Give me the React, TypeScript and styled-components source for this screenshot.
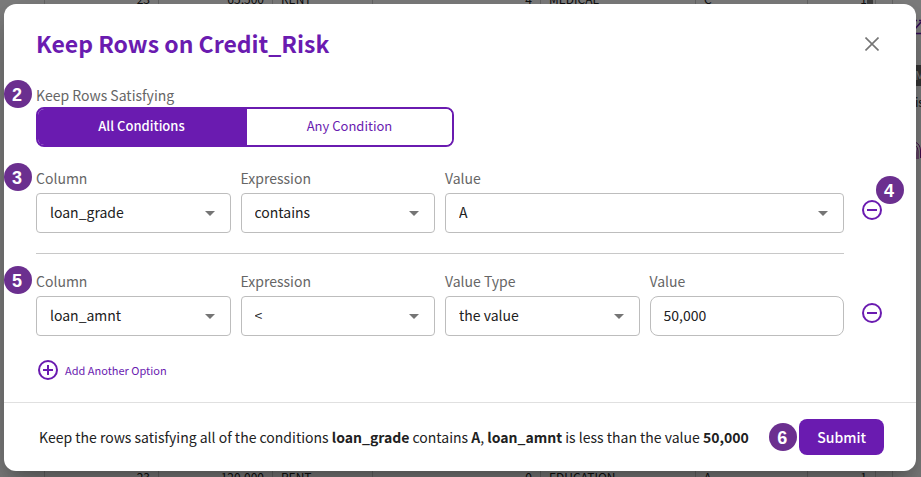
import React, { useId } from "react";
import styled, { createGlobalStyle, css } from "styled-components";

const purple = "#6a1bb0";

const GlobalStyle = createGlobalStyle`
  *, *::before, *::after { box-sizing: border-box; }
  body {
    margin: 0;
    color: #212121;
    font-family: "Noto Sans CJK JP", "Noto Sans", sans-serif;
    font-size: 14px;
    line-height: 20px;
  }
  button, input, select { font: inherit; color: inherit; margin: 0; }
`;

const Page = styled.div`
  position: relative;
  display: grid;
  min-height: 100vh;
  overflow: hidden;
`;

const Sheet = styled.div`
  position: absolute;
  inset: 0;
  display: flex;
  align-items: center;
  padding-bottom: 2px;
  overflow: hidden;
  background: #fff;
`;

const SheetTable = styled.table`
  flex: none;
  width: 848px;
  margin-left: 44px;
  border-collapse: collapse;
  table-layout: fixed;
  font-size: 12px;
`;

const SheetRow = styled.tr<{ $tall?: boolean }>`
  height: ${(p) => (p.$tall ? "448px" : "30px")};
`;

const SheetCell = styled.td<{ $numeric?: boolean }>`
  padding: 0 8px;
  border: solid #d0d0d0;
  border-width: 0 1px;
  text-align: ${(p) => (p.$numeric ? "right" : "left")};
`;

const ScrollThumb = styled.div`
  position: absolute;
  top: 0;
  right: 48px;
  width: 6px;
  height: 40px;
  background: #808080;
`;

const SidePanel = styled.aside`
  flex: 1;
  align-self: stretch;
  display: flex;
  flex-direction: column;
  align-items: flex-end;
  min-width: 0;
  padding-top: 18px;
  overflow: hidden;
`;

const SideTag = styled.span`
  width: 6px;
  height: 21px;
  margin: 29px 0 6px;
  overflow: hidden;
  background: #6c6c6c;
  color: #fff;
  font-size: 12px;
`;

const SideText = styled.span`
  width: 6px;
  height: 20px;
  margin-bottom: 28px;
  overflow: hidden;
  font-size: 12px;
`;

const Scrim = styled.div`
  position: absolute;
  inset: 0;
  background: rgba(0, 0, 0, 0.5);
`;

const Dialog = styled.section`
  position: relative;
  align-self: start;
  margin: 4px 5px 6px 4px;
  border-radius: 12px;
  background: #fff;
  box-shadow: 0 11px 15px -7px rgba(0, 0, 0, 0.2),
    0 24px 38px 3px rgba(0, 0, 0, 0.14), 0 9px 46px 8px rgba(0, 0, 0, 0.12);
`;

const Header = styled.header`
  display: flex;
  align-items: center;
  justify-content: space-between;
  padding: 24px 32px 25px;
`;

const Title = styled.h1`
  margin: 0;
  padding-bottom: 2px;
  color: ${purple};
  font-size: 23px;
  font-weight: 700;
  line-height: 30px;
`;

const IconButton = styled.button`
  display: flex;
  align-items: center;
  justify-content: center;
  width: 24px;
  height: 24px;
  padding: 0;
  border: 0;
  background: none;
  color: ${purple};
  cursor: pointer;
`;

const CloseButton = styled(IconButton)`
  color: #757575;
`;

const Body = styled.div`
  padding: 0 32px 22px;
`;

const Match = styled.div`
  position: relative;
  margin-bottom: 21px;
`;

const Caption = styled.div`
  margin-bottom: 2px;
  color: #666;
`;

const Segments = styled.div`
  display: grid;
  grid-template-columns: 1fr 1fr;
  width: 418px;
  max-width: 100%;
  height: 40px;
  overflow: hidden;
  border: 2px solid ${purple};
  border-radius: 8px;
`;

const Segment = styled.button<{ $active?: boolean }>`
  padding: 0 0 2px;
  border: 0;
  background: ${(p) => (p.$active ? purple : "#fff")};
  color: ${(p) => (p.$active ? "#fff" : purple)};
  font-size: 13px;
  font-weight: ${(p) => (p.$active ? 500 : 400)};
  cursor: pointer;

  & + & {
    border-left: 2px solid ${purple};
  }
`;

const Condition = styled.div`
  position: relative;
  display: flex;
  align-items: flex-end;
  gap: 16px;
`;

const Fields = styled.div`
  flex: 1;
  display: grid;
  grid-template-columns: repeat(4, 1fr);
  gap: 10px;
`;

const FieldBox = styled.div<{ $wide?: boolean }>`
  display: flex;
  flex-direction: column;
  gap: 5px;
  min-width: 0;
  grid-column: ${(p) => (p.$wide ? "span 2" : "auto")};
`;

const Label = styled.label`
  color: #666;
`;

const SelectWrap = styled.div`
  position: relative;
`;

const control = css`
  display: block;
  width: 100%;
  height: 40px;
  padding: 0 13px 2px;
  border: 1px solid #bdbdbd;
  background: #fff;
  color: #212121;
`;

const Select = styled.select`
  ${control}
  border-radius: 4px;
  appearance: none;
`;

const Input = styled.input`
  ${control}
  border-radius: 8px;
`;

const Arrow = styled.svg`
  position: absolute;
  top: 8px;
  right: 9px;
  width: 24px;
  height: 24px;
  fill: #757575;
  pointer-events: none;
`;

const RemoveCell = styled.div`
  position: relative;
  display: flex;
  align-items: center;
  height: 46px;
`;

const Divider = styled.hr`
  height: 1px;
  margin: 20px 40px 17px 0;
  border: 0;
  background: #c8c8c8;
`;

const AddButton = styled.button`
  display: flex;
  align-items: center;
  gap: 7px;
  margin-top: 24px;
  padding: 0 2px;
  border: 0;
  background: none;
  color: ${purple};
  font-size: 11px;
  cursor: pointer;
`;

const Footer = styled.footer`
  display: flex;
  align-items: center;
  justify-content: space-between;
  padding: 16px 32px 16px 35px;
  border-top: 1px solid #e0e0e0;
`;

const Summary = styled.p`
  margin: 0;
`;

const Actions = styled.div`
  display: flex;
  align-items: center;
  gap: 2px;
`;

const Submit = styled.button`
  height: 36px;
  padding: 0 18px;
  border: 0;
  border-radius: 8px;
  background: ${purple};
  color: #fff;
  font-weight: 500;
  cursor: pointer;
`;

const Badge = styled.span`
  display: flex;
  align-items: center;
  justify-content: center;
  width: 28px;
  height: 28px;
  padding: 2px 2px 0 0;
  border-radius: 50%;
  background: #6b2f8f;
  color: #fff;
  font-family: "Liberation Sans", Arial, sans-serif;
  font-size: 18px;
  font-weight: 700;
`;

const SideBadge = styled(Badge)`
  position: absolute;
  top: -5px;
  left: -32px;
`;

const CornerBadge = styled(Badge)`
  position: absolute;
  top: -11px;
  left: 16px;
`;

const CircleIcon = ({ plus }: { plus?: boolean }) => (
  <svg width="20" height="20" viewBox="0 0 20 20" fill="none" stroke="currentColor" strokeWidth="2" aria-hidden="true">
    <circle cx="10" cy="10" r="9" />
    <path d={plus ? "M5 10h10M10 5v10" : "M5 10h10"} />
  </svg>
);

function Field({ label, value, wide }: { label: string; value: string; wide?: boolean }) {
  const id = useId();
  return (
    <FieldBox $wide={wide}>
      <Label htmlFor={id}>{label}</Label>
      <SelectWrap>
        <Select id={id} defaultValue={value}>
          <option>{value}</option>
        </Select>
        <Arrow viewBox="0 0 24 24" aria-hidden="true">
          <path d="M7 10l5 5 5-5z" />
        </Arrow>
      </SelectWrap>
    </FieldBox>
  );
}

const columns = [
  { width: 114, numeric: true },
  { width: 114, numeric: true },
  { width: 100 },
  { width: 168, numeric: true },
  { width: 155 },
  { width: 112 },
  { width: 68, numeric: true },
  { width: 17 },
];

const rows = [
  ["23", "65,500", "RENT", "4", "MEDICAL", "C", "1", ""],
  [],
  ["23", "120,000", "RENT", "0", "EDUCATION", "A", "1", ""],
];

export default function App() {
  return (
    <Page>
      <GlobalStyle />
      <Sheet aria-hidden="true">
        <SheetTable>
          <colgroup>
            {columns.map((c, i) => (
              <col key={i} width={c.width} />
            ))}
          </colgroup>
          <tbody>
            {rows.map((row, r) => (
              <SheetRow key={r} $tall={row.length === 0}>
                {columns.map((c, i) => (
                  <SheetCell key={i} $numeric={c.numeric}>
                    {row[i]}
                  </SheetCell>
                ))}
              </SheetRow>
            ))}
          </tbody>
        </SheetTable>
        <ScrollThumb />
        <SidePanel>
          <svg width="6" height="18" viewBox="0 0 6 18" fill="none" stroke={purple}>
            <path d="M0 2.5h2M4 2.5h2M0 11l6-7M0 15.500h6" strokeWidth="1.500" />
          </svg>
          <SideTag>M</SideTag>
          <SideText>is</SideText>
          <svg width="6" height="20" viewBox="0 0 6 20" fill="none" stroke="#8a1a9a">
            <path d="M0 2q5 2 5.500 8v8M0 5q3 2 3 6v8M0 9q1 1 1 4v6" />
          </svg>
        </SidePanel>
      </Sheet>
      <Scrim />
      <Dialog role="dialog" aria-labelledby="dialog-title">
        <Header>
          <Title id="dialog-title">Keep Rows on Credit_Risk</Title>
          <CloseButton type="button" aria-label="Close">
            <svg width="14" height="14" viewBox="0 0 14 14" fill="none" stroke="currentColor" strokeWidth="1.600">
              <path d="M.5.5l13 13M13.500.5l-13 13" />
            </svg>
          </CloseButton>
        </Header>
        <Body>
          <Match>
            <SideBadge>2</SideBadge>
            <Caption id="match-label">Keep Rows Satisfying</Caption>
            <Segments role="group" aria-labelledby="match-label">
              <Segment type="button" $active aria-pressed="true">All Conditions</Segment>
              <Segment type="button" aria-pressed="false">Any Condition</Segment>
            </Segments>
          </Match>
          <Condition>
            <SideBadge>3</SideBadge>
            <Fields>
              <Field label="Column" value="loan_grade" />
              <Field label="Expression" value="contains" />
              <Field label="Value" value="A" wide />
            </Fields>
            <RemoveCell>
              <IconButton type="button" aria-label="Remove condition"><CircleIcon /></IconButton>
              <CornerBadge>4</CornerBadge>
            </RemoveCell>
          </Condition>
          <Divider />
          <Condition>
            <SideBadge>5</SideBadge>
            <Fields>
              <Field label="Column" value="loan_amnt" />
              <Field label="Expression" value="&lt;" />
              <Field label="Value Type" value="the value" />
              <FieldBox>
                <Label htmlFor="amount">Value</Label>
                <Input id="amount" type="text" defaultValue="50,000" />
              </FieldBox>
            </Fields>
            <RemoveCell>
              <IconButton type="button" aria-label="Remove condition"><CircleIcon /></IconButton>
            </RemoveCell>
          </Condition>
          <AddButton type="button">
            <CircleIcon plus />
            Add Another Option
          </AddButton>
        </Body>
        <Footer>
          <Summary>
            Keep the rows satisfying all of the conditions <b>loan_grade</b> contains <b>A</b>,{" "}
            <b>loan_amnt</b> is less than the value <b>50,000</b>
          </Summary>
          <Actions>
            <Badge>6</Badge>
            <Submit type="button">Submit</Submit>
          </Actions>
        </Footer>
      </Dialog>
    </Page>
  );
}
